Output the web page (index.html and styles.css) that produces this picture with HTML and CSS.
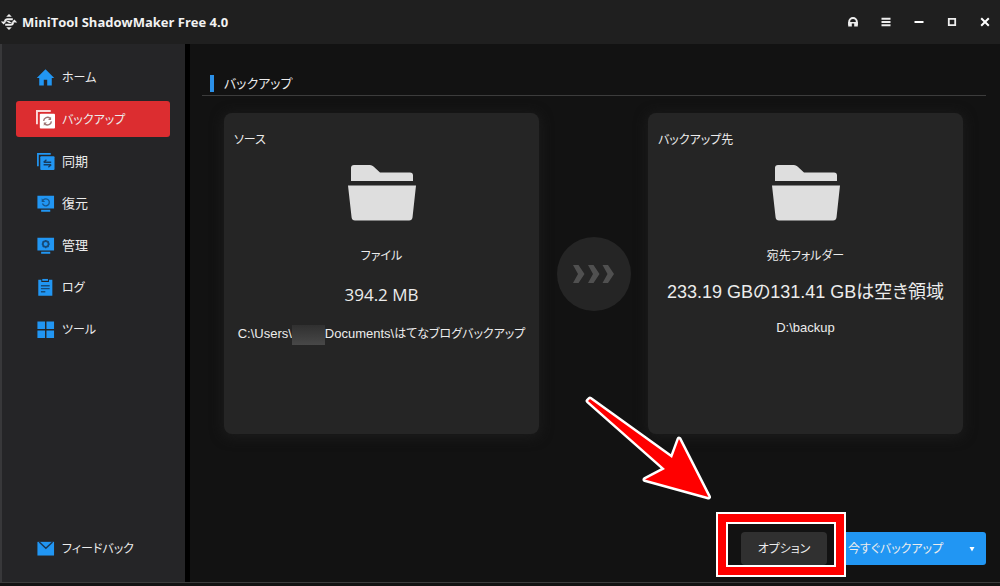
FILE: index.html
```html
<!DOCTYPE html>
<html lang="ja">
<head>
<meta charset="utf-8">
<title>MiniTool ShadowMaker Free 4.0</title>
<link rel="stylesheet" href="styles.css">
</head>
<body>
<div class="app">
  <header class="titlebar">
    <svg class="logo" viewBox="0 0 18 18" aria-hidden="true">
      <path d="M6.200 3.800 9 1l2.800 2.800zM6.200 14.200 9 17l2.800-2.800z" fill="#eee"/>
      <path d="M12.800 6.200H7.600Q5 6.200 5 8.800M5.200 11.800h5.200q2.600 0 2.600-2.600" fill="none" stroke="#eee" stroke-width="2"/>
      <path d="M.8 8.400h5.600L3.600 11.600zM17.200 9.600h-5.600l2.800-3.200zM6 8h3l3 2H9z" fill="#eee"/>
    </svg>
    <h1 class="app-name">MiniTool ShadowMaker Free 4.0</h1>
    <div class="window-buttons">
      <button class="window-button" aria-label="サポート"><svg viewBox="0 0 12 12"><path d="M2.200 9V5.800a3.800 3.800 0 0 1 7.600 0V9" fill="none" stroke="#eee" stroke-width="2"/><path d="M1.200 6h3.600v4.400H1.200zM7.200 6h3.600v4.400H7.200zM4 6h4v1.600H4z" fill="#eee"/></svg></button>
      <button class="window-button" aria-label="メニュー"><svg viewBox="0 0 12 12"><path d="M1.500 2.800h9M1.500 6h9M1.500 9.200h9" stroke="#eee" stroke-width="2"/></svg></button>
      <button class="window-button" aria-label="最小化"><svg viewBox="0 0 12 12"><path d="M1.500 6h9" stroke="#fff" stroke-width="2"/></svg></button>
      <button class="window-button" aria-label="最大化"><svg viewBox="0 0 12 12"><path d="M2.800 2.800h6.400v6.400H2.800z" fill="none" stroke="#eee" stroke-width="1.800"/></svg></button>
      <button class="window-button" aria-label="閉じる"><svg viewBox="0 0 12 12"><path d="M2.200 2.200l7.600 7.600M9.800 2.200 2.200 9.800" stroke="#fff" stroke-width="2"/></svg></button>
    </div>
  </header>

  <div class="body">
    <nav class="sidebar">
      <a class="nav-item" href="#home"><svg class="nav-icon" viewBox="0 0 20 20"><path d="M10 1.200.8 10.400h2.600v8h4.800v-6h3.600v6h4.800v-8h2.600z" fill="#2196f3"/></svg><span class="nav-label">ホーム</span></a>
      <a class="nav-item nav-item-active" href="#backup" aria-current="page"><svg class="nav-icon" viewBox="0 0 20 20"><path d="M1 15V1h14.500" fill="none" stroke="#fbdada" stroke-width="2"/><rect x="4" y="4" width="16" height="15.500" rx="1" fill="#fff"/><path d="M8 11.400a4.200 4.200 0 0 1 6.800-2.700M16.200 12a4.200 4.200 0 0 1-6.800 2.900" fill="none" stroke="#9b7474" stroke-width="1.500"/><path d="M15.900 7v3.400h-3.200zM8.200 16.500v-3.400h3.200z" fill="#9b7474"/></svg><span class="nav-label">バックアップ</span></a>
      <a class="nav-item nav-item-kanji" href="#sync"><svg class="nav-icon" viewBox="0 0 20 20"><path d="M2 15V2h13.500" fill="none" stroke="#2196f3" stroke-width="1.800"/><rect x="4.500" y="4.500" width="15" height="14.500" rx="1" fill="#2196f3"/><path d="M8 10.800h8M8 13.400h8M8 10.800l3-2.600M16 13.400l-3 2.600" fill="none" stroke="#163d62" stroke-width="1.400"/></svg><span class="nav-label">同期</span></a>
      <a class="nav-item nav-item-kanji" href="#restore"><svg class="nav-icon" viewBox="0 0 20 20"><path d="M1.500 1.800h17.500v13.400H1.500zM5.400 16.600h9.600v2H5.400z" fill="#2196f3"/><path d="M7.600 6.200a3.700 3.700 0 1 1-.8 3.800" fill="none" stroke="#17568c" stroke-width="1.400"/><path d="M6 4.400v4h3.600z" fill="#17568c"/></svg><span class="nav-label">復元</span></a>
      <a class="nav-item nav-item-kanji" href="#manage"><svg class="nav-icon" viewBox="0 0 20 20"><path d="M1.500 1.800h17.500v13.400H1.500zM5.400 16.600h9.600v2H5.400z" fill="#2196f3"/><circle cx="10.200" cy="8.500" r="3" fill="none" stroke="#174b78" stroke-width="1.800"/><path d="M10.200 4.200v1.500M10.200 11.300v1.500M6 8.500h1.400M13 8.500h1.400M7.200 5.500l1 1M13.200 5.500l-1 1M7.200 11.500l1-1M13.200 11.500l-1-1" stroke="#174b78" stroke-width="1.400"/></svg><span class="nav-label">管理</span></a>
      <a class="nav-item" href="#log"><svg class="nav-icon" viewBox="0 0 20 20"><path d="M2.400 1.800h3.200v2.400h8V1.800h3.600v16.800H2.400z" fill="#2196f3"/><path d="M6.600 1h6v2h-6z" fill="#2196f3"/><path d="M5.200 8.200h9.200M5.200 11.200h9.200M5.200 14.400h4.600" stroke="#174b78" stroke-width="1.500"/></svg><span class="nav-label">ログ</span></a>
      <a class="nav-item" href="#tools"><svg class="nav-icon" viewBox="0 0 20 20"><path d="M1.500 1.500h8v8h-8zM11 1.500h8v8h-8zM1.500 11h8v8h-8zM11 11h8v8h-8z" fill="#2196f3"/></svg><span class="nav-label">ツール</span></a>
      <a class="nav-item nav-item-last" href="#feedback"><svg class="nav-icon" viewBox="0 0 20 20"><path d="M1.500 3h17.500v14.400H1.500z" fill="#2196f3"/><path d="M3.400 3.200l7 6.600 7-6.600" fill="none" stroke="#1a3653" stroke-width="1.600"/></svg><span class="nav-label">フィードバック</span></a>
    </nav>

    <main class="content">
      <h2 class="page-title">バックアップ</h2>

      <div class="cards">
        <section class="card">
          <h3 class="card-title">ソース</h3>
          <svg class="folder" viewBox="0 0 68 56" aria-hidden="true"><path d="M3 16V3q0-3 3-3h16q2 0 3.500 1.500L32 7.500h30q3 0 3 3V16zM0 20.500h68l-3.500 32q-.4 3-3.400 3H7q-3 0-3.400-3z" fill="#dedede"/></svg>
          <p class="kind">ファイル</p>
          <p class="size size-latin">394.2 MB</p>
          <p class="path">C:\Users\<span class="masked"></span>Documents\<span class="kana">はてなブログバックアップ</span></p>
        </section>

        <div class="flow">
          <svg class="flow-icon" viewBox="0 0 74 74" aria-hidden="true"><circle cx="37" cy="37" r="37" fill="#252525"/><path d="M16 28h5.500l6 9-6 9H16l5-9zM31 28h5.500l6 9-6 9H31l5-9zM45.500 28H51l6 9-6 9h-5.500l5-9z" fill="#505050"/></svg>
        </div>

        <section class="card">
          <h3 class="card-title">バックアップ先</h3>
          <svg class="folder" viewBox="0 0 68 56" aria-hidden="true"><path d="M3 16V3q0-3 3-3h16q2 0 3.500 1.500L32 7.500h30q3 0 3 3V16zM0 20.500h68l-3.500 32q-.4 3-3.400 3H7q-3 0-3.400-3z" fill="#dedede"/></svg>
          <p class="kind">宛先フォルダー</p>
          <p class="size">233.19 GBの131.41 GBは空き領域</p>
          <p class="path">D:\backup</p>
        </section>
      </div>

      <div class="actions">
        <div class="option">
          <button class="option-button">オプション</button>
          <div class="highlight"></div>
          <svg class="pointer" viewBox="0 0 130 110" aria-hidden="true"><path d="M8 7 90 66l7-19 29.500 58L63 87.500 83 77 6 9z" fill="#fff" stroke="#fff" stroke-width="5" stroke-linejoin="round"/><path d="M8 7 90 66l7-19 29.500 58L63 87.500 83 77 6 9z" fill="#f00"/></svg>
        </div>
        <div class="split">
          <button class="split-main">今すぐバックアップ</button>
          <button class="split-more" aria-label="その他"><svg class="caret" viewBox="0 0 6 6"><path d="M.5 1h5L3 5.500z" fill="#fff"/></svg></button>
        </div>
      </div>
    </main>
  </div>
</div>
</body>
</html>
```

FILE: styles.css
```css
* {
  box-sizing: border-box;
}

body {
  margin: 0;
  background: #121212;
  color: #ececec;
  font: 12px/20px "Liberation Sans", "Noto Sans CJK JP", sans-serif;
  font-feature-settings: "palt";
}

h1, h2, h3, p {
  margin: 0;
  font-weight: 400;
}

button {
  margin: 0;
  padding: 0;
  border: 0;
  color: inherit;
  font: inherit;
  font-feature-settings: inherit;
}

svg {
  display: block;
}

.app {
  display: flex;
  flex-direction: column;
  min-height: 100vh;
  padding-bottom: 3px;
}

.titlebar {
  display: flex;
  align-items: center;
  gap: 4px;
  height: 44px;
  background: #1f1f1f;
}

.logo {
  width: 18px;
  height: 18px;
}

.app-name {
  flex: 1;
  color: #f2f2f2;
  font: 700 13px/20px "Open Sans", sans-serif;
}

.window-buttons {
  display: flex;
}

.window-button {
  display: grid;
  place-items: center;
  width: 33px;
  height: 32px;
  padding-left: 2px;
  background: none;
}

.window-button svg {
  width: 12px;
  height: 12px;
}

.body {
  display: flex;
  flex: 1;
  border-bottom: 1px solid #3c3c3c;
}

.sidebar {
  display: flex;
  flex-direction: column;
  gap: 6px;
  flex: 0 0 190px;
  padding: 15px 15px 16px 14px;
  border-left: 2px solid #38383a;
  border-right: 5px solid #000;
  background: #252527;
}

.nav-item {
  display: flex;
  align-items: center;
  gap: 7px;
  height: 36px;
  padding-left: 20px;
  border-radius: 3px;
  color: inherit;
  text-decoration: none;
}

.nav-label {
  padding-top: 2px;
}

.nav-item-kanji {
  font-size: 13px;
}

.nav-item-active {
  background: #dc2d30;
}

.nav-item-last {
  margin-top: auto;
}

.nav-icon {
  width: 19px;
  height: 19px;
}

.content {
  display: flex;
  flex-direction: column;
  flex: 1;
  min-width: 0;
  padding: 28px 14px 17px 12px;
}

.page-title {
  display: flex;
  align-items: center;
  gap: 10px;
  padding: 0 8px;
  border-bottom: 1px solid #3c3c3c;
  font-size: 13px;
  line-height: 23px;
}

.page-title::before {
  content: "";
  width: 4px;
  height: 17px;
  background: #2b90e8;
}

.cards {
  display: flex;
  padding: 17px 23px 0 22px;
}

.card {
  display: flex;
  flex-direction: column;
  align-items: center;
  flex: 1 1 0;
  min-width: 0;
  min-height: 321px;
  padding: 17px 10px;
  border-radius: 8px;
  background: #252525;
  box-shadow: 0 2px 12px 2px #1b1b1b;
}

.card-title {
  align-self: stretch;
  font-size: 12px;
}

.folder {
  width: 68px;
  height: 56px;
  margin: 15px 0 25px;
}

.size {
  margin-top: 13px;
  font-size: 18px;
  line-height: 26px;
  white-space: nowrap;
}

.size-latin {
  font-family: "Open Sans", sans-serif;
  font-size: 17px;
  line-height: 32px;
}

.path {
  margin-top: 13px;
  font-size: 13px;
  white-space: nowrap;
}

.kana {
  font-size: 12px;
}

.masked {
  display: inline-block;
  width: 33px;
  height: 20px;
  vertical-align: middle;
  background: linear-gradient(#303030, #484848);
}

.flow {
  display: grid;
  place-items: center;
  flex: 0 0 109px;
}

.flow-icon {
  width: 74px;
  height: 74px;
}

.actions {
  display: flex;
  justify-content: flex-end;
  gap: 13px;
  margin-top: auto;
}

.option {
  position: relative;
}

.option-button {
  width: 86px;
  height: 33px;
  border-radius: 4px;
  background: #303030;
}

.highlight {
  position: absolute;
  inset: -20px -19px -12px -25px;
  z-index: 1;
  border: 2px solid #fff;
  outline: 2px solid #fff;
  outline-offset: -12px;
  box-shadow: inset 0 0 0 8px #f00;
  pointer-events: none;
}

.pointer {
  position: absolute;
  right: 115px;
  bottom: 63px;
  width: 130px;
  height: 110px;
  pointer-events: none;
}

.split {
  display: flex;
  width: 146px;
  height: 33px;
  border-radius: 3px;
  background: #2196f3;
}

.split-main {
  flex: 1;
  padding-left: 8px;
  background: none;
  text-align: left;
  white-space: nowrap;
}

.split-more {
  display: grid;
  place-items: center;
  width: 28px;
  background: none;
}

.caret {
  width: 6px;
  height: 6px;
}
```
